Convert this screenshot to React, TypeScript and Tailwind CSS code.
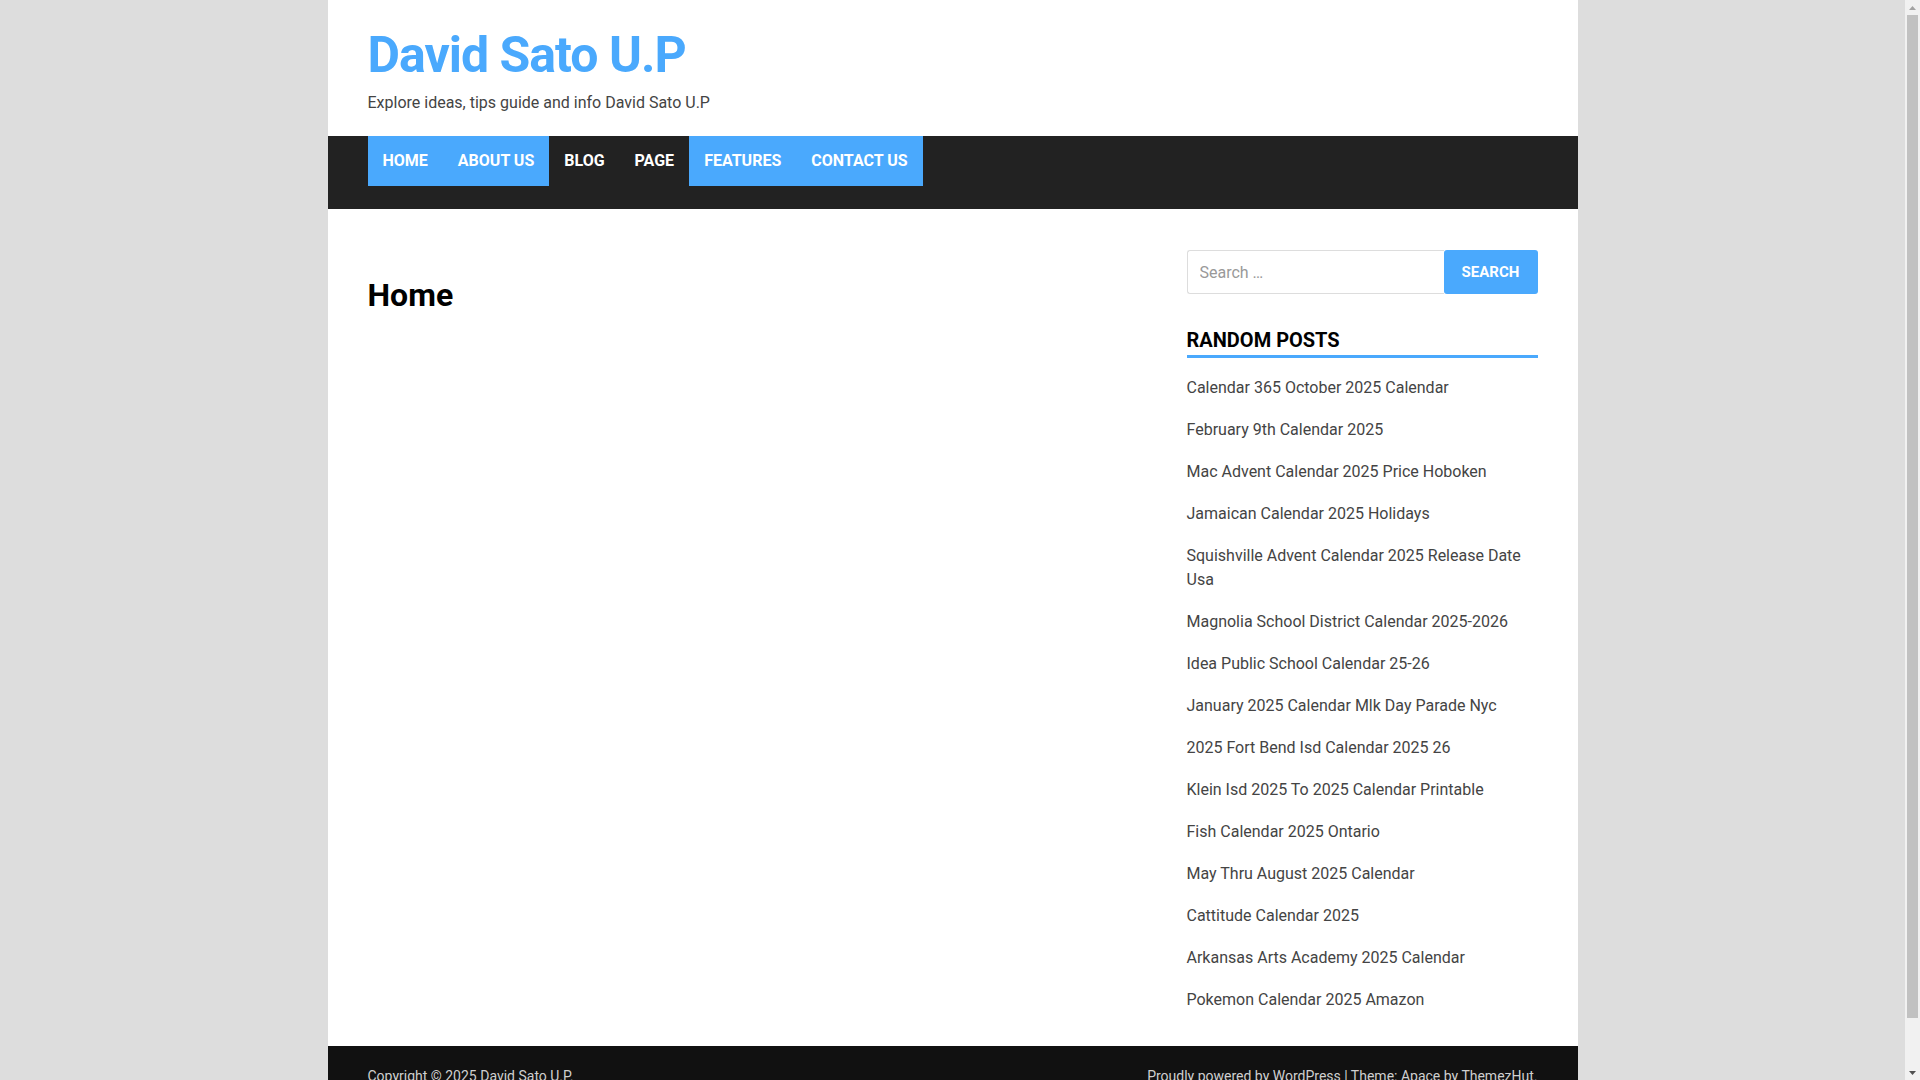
const NAV = [
  { label: "Home", blue: true },
  { label: "About Us", blue: true },
  { label: "Blog", blue: false },
  { label: "Page", blue: false },
  { label: "Features", blue: true },
  { label: "Contact Us", blue: true },
];

const POSTS = [
  "Calendar 365 October 2025 Calendar",
  "February 9th Calendar 2025",
  "Mac Advent Calendar 2025 Price Hoboken",
  "Jamaican Calendar 2025 Holidays",
  "Squishville Advent Calendar 2025 Release Date Usa",
  "Magnolia School District Calendar 2025-2026",
  "Idea Public School Calendar 25-26",
  "January 2025 Calendar Mlk Day Parade Nyc",
  "2025 Fort Bend Isd Calendar 2025 26",
  "Klein Isd 2025 To 2025 Calendar Printable",
  "Fish Calendar 2025 Ontario",
  "May Thru August 2025 Calendar",
  "Cattitude Calendar 2025",
  "Arkansas Arts Academy 2025 Calendar",
  "Pokemon Calendar 2025 Amazon",
];

function NavItem(props: { label: string; blue: boolean }) {
  return (
    <li>
      <a
        href="#"
        className={[
          "block h-[50px] px-[15px] text-[16px] leading-[50px] font-bold uppercase text-white",
          props.blue ? "bg-[#4aa9fd]" : "",
        ].join(" ")}
      >
        {props.label}
      </a>
    </li>
  );
}

// window scrollbar as it shows in the shot
function ScrollBar() {
  return (
    <div className="flex w-[15px] shrink-0 flex-col bg-[#f1f1f1]">
      <div className="flex h-[15px] items-center justify-center">
        <svg width="7" height="4" viewBox="0 0 7 4">
          <path d="M3.5 0L7 4H0z" fill="#a3a3a3" />
        </svg>
      </div>
      <div className="flex-1 px-[2px]">
        <div className="h-[1003px] bg-[#c1c1c1]" />
      </div>
      <div className="flex h-[15px] items-center justify-center">
        <svg width="7" height="4" viewBox="0 0 7 4">
          <path d="M0 0H7L3.5 4z" fill="#505050" />
        </svg>
      </div>
    </div>
  );
}

export default function App() {
  return (
    <div className="flex h-screen overflow-hidden bg-[#dddddd]">
      <div className="flex-1 overflow-y-auto [scrollbar-width:none] font-['Roboto',_'Liberation_Sans',_sans-serif]">
        <div className="mx-auto w-[1250px] bg-white">
          <header className="px-10 pt-[24px] pb-[21px]">
            <h1 className="text-[50px] leading-[62px] font-bold tracking-[-1px] text-[#4aa9fd]">David Sato U.P</h1>
            <p className="mt-[5px] text-[16px] leading-[24px] text-[#444]">
              Explore ideas, tips guide and info David Sato U.P
            </p>
          </header>

          <nav className="bg-[#222] px-10 pb-[23px]">
            <ul className="flex">
              {NAV.map((n) => (
                <NavItem key={n.label} label={n.label} blue={n.blue} />
              ))}
            </ul>
          </nav>

          <div className="flex justify-between px-10 pt-[41px] pb-[34px]">
            <main className="flex-1">
              <h2 className="mt-[26px] text-[32px] leading-[38px] font-bold text-black">Home</h2>
            </main>

            <aside className="w-[351px]">
              <form className="flex h-[44px]" onSubmit={(e) => e.preventDefault()}>
                <input
                  type="search"
                  placeholder="Search …"
                  className="h-full min-w-0 flex-1 rounded-l-[3px] border border-r-0 border-[#dddddd] px-[12px] text-[16px] text-[#444] outline-none placeholder:text-[#999]"
                />
                <button
                  type="submit"
                  className="h-full w-[94px] rounded-[3px] bg-[#4aa9fd] text-[15px] font-bold uppercase text-white"
                >
                  Search
                </button>
              </form>

              <h3 className="mt-[34px] border-b-[3px] border-[#4aa9fd] pb-[3px] text-[20px] leading-[24px] font-bold uppercase text-black">
                Random Posts
              </h3>
              <ul className="mt-[18px] flex flex-col gap-[18px]">
                {POSTS.map((p) => (
                  <li key={p} className="text-[16px] leading-[24px] text-[#444]">
                    <a href="#">{p}</a>
                  </li>
                ))}
              </ul>
            </aside>
          </div>

          <footer className="flex justify-between bg-[#111] px-10 pt-[18px] pb-[43px] text-[14px] leading-[24px] text-[#cfcfcf]">
            <div>Copyright © 2025 David Sato U.P.</div>
            <div>
              Proudly powered by <a href="#">WordPress</a> | Theme: Apace by <a href="#">ThemezHut</a>.
            </div>
          </footer>
        </div>
      </div>
      <ScrollBar />
    </div>
  );
}
